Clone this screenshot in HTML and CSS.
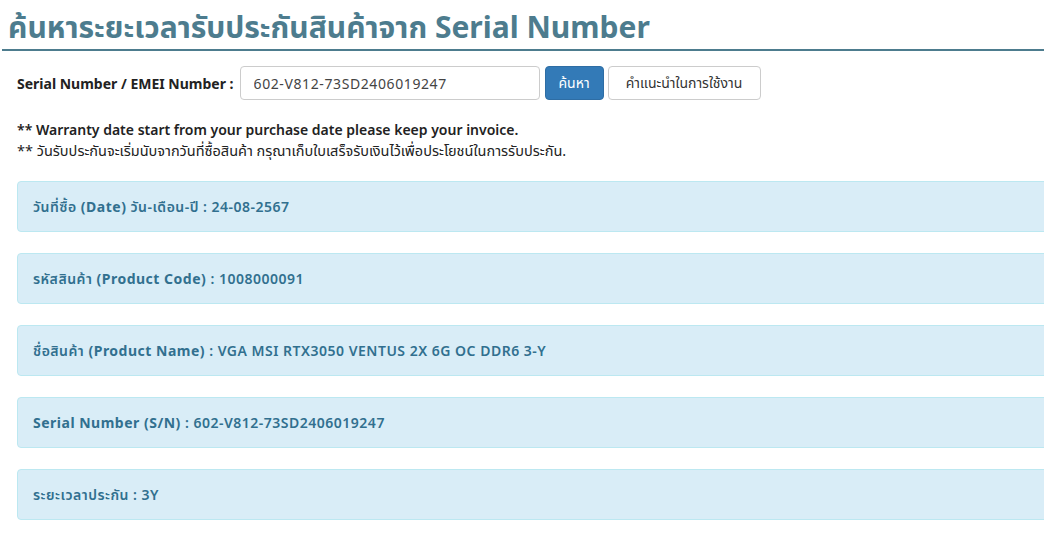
FILE: index.html
```html
<!DOCTYPE html>
<html lang="th">
<head>
<meta charset="utf-8">
<title>Warranty</title>
<link rel="stylesheet" href="styles.css">
</head>
<body>
<div class="page">
  <h1 class="title">ค้นหาระยะเวลารับประกันสินค้าจาก Serial Number</h1>
  <div class="content">
    <form class="search">
      <label class="search-label">Serial Number / EMEI Number :</label>
      <input class="search-input" type="text" value="602-V812-73SD2406019247">
      <button class="btn btn-primary" type="button">ค้นหา</button>
      <button class="btn btn-default" type="button">คำแนะนำในการใช้งาน</button>
    </form>
    <p class="note note-en">** Warranty date start from your purchase date please keep your invoice.</p>
    <p class="note note-th">** วันรับประกันจะเริ่มนับจากวันที่ซื้อสินค้า กรุณาเก็บใบเสร็จรับเงินไว้เพื่อประโยชน์ในการรับประกัน.</p>
    <div class="panel">วันที่ซื้อ <b>(Date)</b> วัน-เดือน-ปี : 24-08-2567</div>
    <div class="panel">รหัสสินค้า <b>(Product Code)</b> : 1008000091</div>
    <div class="panel">ชื่อสินค้า <b>(Product Name)</b> : VGA MSI RTX3050 VENTUS 2X 6G OC DDR6 3-Y</div>
    <div class="panel"><b>Serial Number (S/N)</b> : 602-V812-73SD2406019247</div>
    <div class="panel">ระยะเวลาประกัน : 3Y</div>
  </div>
</div>
</body>
</html>
```

FILE: styles.css
```css
html, body {
  margin: 0;
  padding: 0;
  background: #fff;
  overflow: hidden;
}
body {
  font-family: "Noto Sans", "Noto Sans Thai", "Noto Sans CJK SC", sans-serif;
  color: #333;
}
.page {
  width: 1060px;
  padding-top: 10px;
}
.title {
  margin: 0 0 0 2px;
  padding: 0 0 5px 6px;
  font-size: 30px;
  font-weight: 700;
  color: #4d7c8e;
  line-height: 34px;
  border-bottom: 2px solid #4d7c8e;
}
.content {
  padding-left: 17px;
}
.search {
  display: flex;
  align-items: center;
  margin-top: 15px;
  height: 34px;
}
.search-label {
  font-size: 14px;
  font-weight: 700;
  color: #222;
  margin-right: 6px;
}
.search-input {
  width: 300px;
  height: 34px;
  box-sizing: border-box;
  border: 1px solid #ccc;
  border-radius: 4px;
  padding: 6px 13px;
  font-family: inherit;
  font-size: 14px;
  letter-spacing: 0.6px;
  color: #444;
  margin-right: 5px;
}
.btn {
  height: 34px;
  box-sizing: border-box;
  border-radius: 4px;
  font-family: inherit;
  font-size: 14px;
  padding: 0 6px;
  margin-right: 4px;
}
.btn-primary {
  background: #337ab7;
  border: 1px solid #2e6da4;
  color: #fff;
  width: 59px;
}
.btn-default {
  background: #fff;
  border: 1px solid #ccc;
  color: #333;
  width: 153px;
}
.note {
  margin: 0;
  color: #222;
}
.note-en {
  margin-top: 20px;
  font-size: 14px;
  font-weight: 600;
  line-height: 20px;
}
.note-th {
  font-size: 14.5px;
  line-height: 20px;
  margin-bottom: 21px;
}
.panel {
  box-sizing: border-box;
  height: 51px;
  margin-bottom: 21px;
  background: #d9edf7;
  border: 1px solid #bce8f1;
  border-radius: 4px;
  color: #31708f;
  font-size: 14px;
  font-weight: 600;
  letter-spacing: 0.5px;
  padding: 0 15px;
  line-height: 49px;
  white-space: nowrap;
}
.panel b {
  font-weight: 700;
}
```
